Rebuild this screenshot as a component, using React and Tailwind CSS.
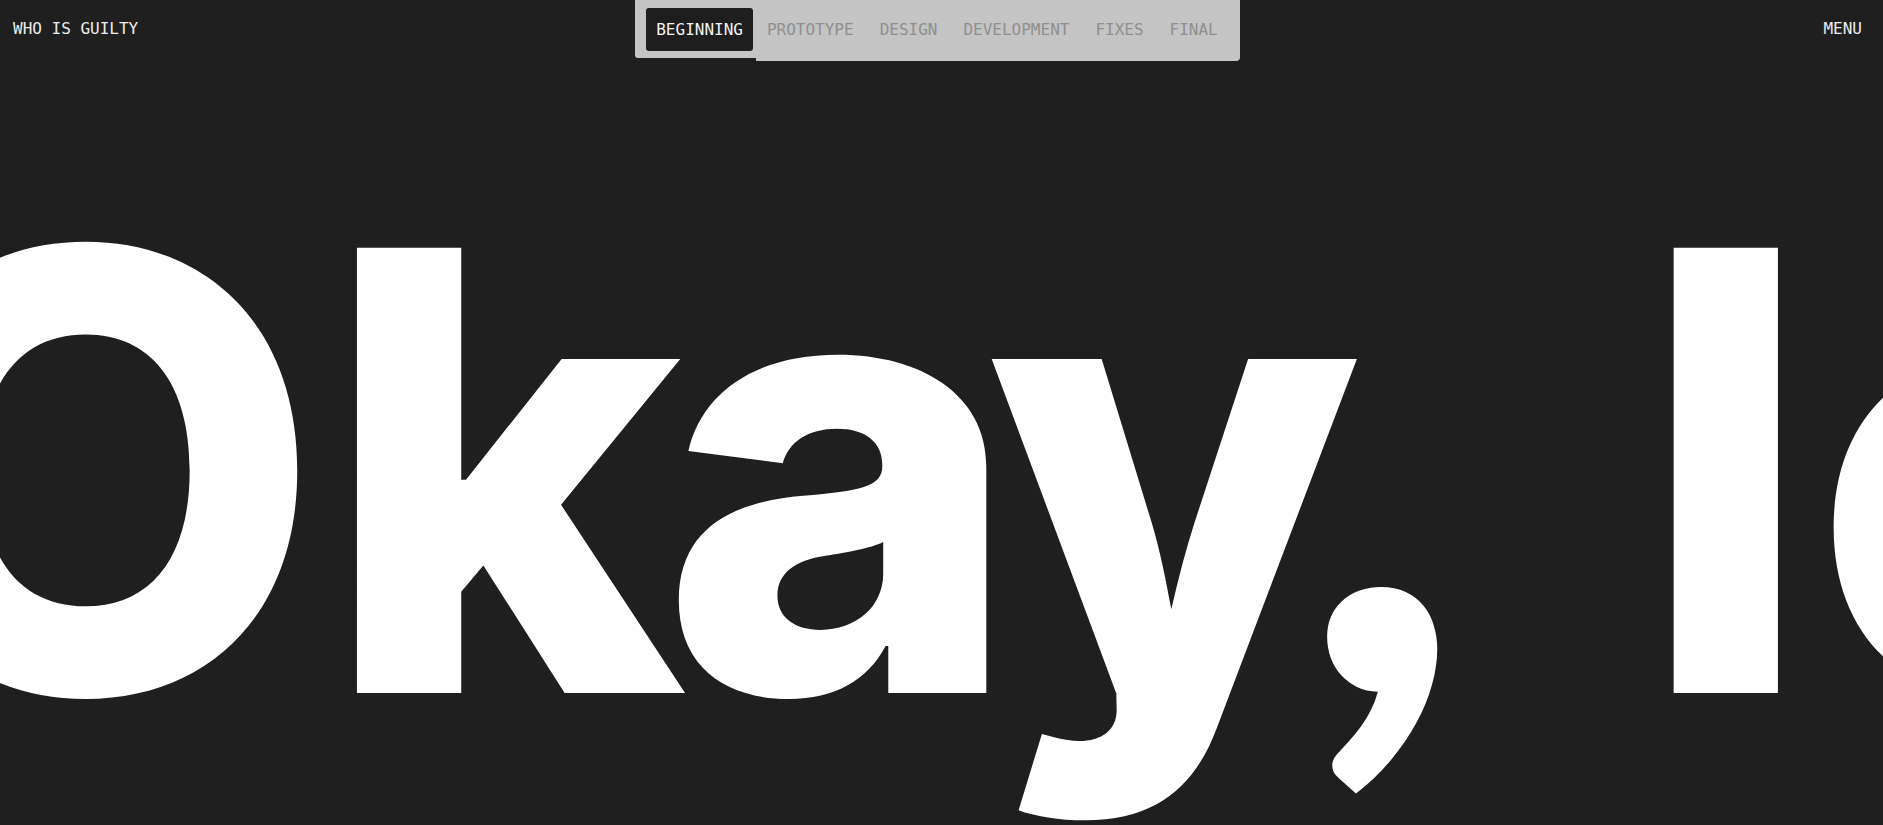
import React from 'react';

const steps = ['PROTOTYPE', 'DESIGN', 'DEVELOPMENT', 'FIXES', 'FINAL'];

const App = () => {
  return (
    <div className="h-[825px] w-full overflow-hidden bg-[#201f20] text-[#ececec] font-['DejaVu_Sans_Mono',monospace]">
      <header className="grid grid-cols-[1fr_auto_1fr] items-start text-[16px] leading-6">
        <div className="h-[58px] pl-[13px] flex items-center">WHO IS GUILTY</div>

        <nav className="justify-self-center ml-[-8px] flex items-start">
          <div className="h-[58px] bg-[#c4c4c4] pl-[11px] pr-[3px] pt-[8px] rounded-bl-[3px]">
            <button className="h-[43px] px-[10px] rounded-[3px] bg-[#1f1e1f] text-[#f2f2f2] flex items-center">
              BEGINNING
            </button>
          </div>
          <div className="h-[61px] bg-[#c4c4c4] pl-[1px] pr-[12px] pt-[8px] flex gap-[6px] rounded-br-[4px]">
            {steps.map((s) => (
              <button key={s} className="h-[43px] px-[10px] flex items-center text-[#8f8f8f]">
                {s}
              </button>
            ))}
          </div>
        </nav>

        <div className="h-[58px] pr-[21px] flex items-center justify-end">MENU</div>
      </header>

      <div className="mt-[104px] ml-[-151px] whitespace-nowrap font-['Inter',sans-serif] font-extrabold text-[612px] leading-none tracking-[-0.04em] text-white">
        <span className="mr-[25px]">O</span>kay
        <span className="ml-[-39px] font-['Lato',sans-serif] font-black text-[695px] leading-[0]">,</span>{' '}
        <span className="ml-[90px]">l</span>
        <span className="ml-[24px]">ook</span>
      </div>
    </div>
  );
};

export default App;
